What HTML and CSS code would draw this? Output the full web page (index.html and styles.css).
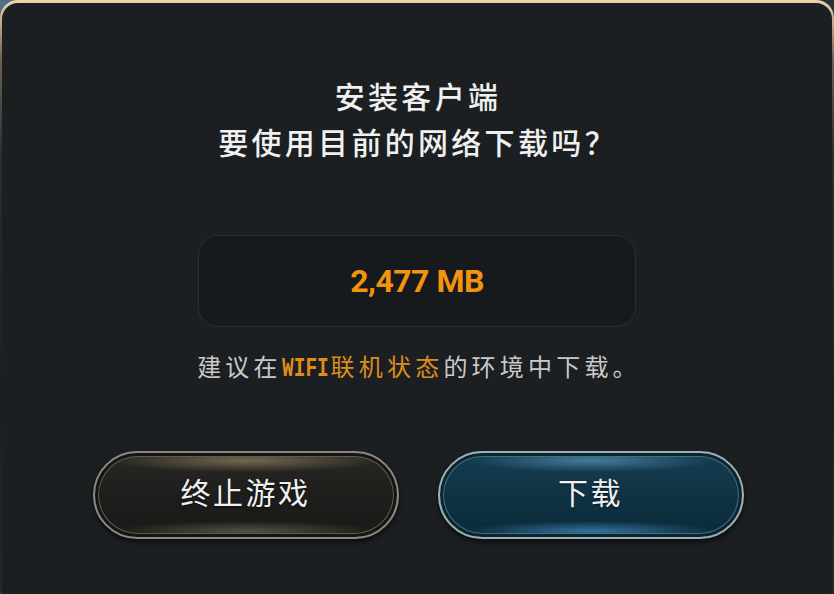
FILE: index.html
```html
<!DOCTYPE html>
<html lang="zh">
<head>
<meta charset="utf-8">
<title>安装客户端</title>
<link rel="stylesheet" href="styles.css">
</head>
<body>
<div class="frame">
  <div class="dialog">
    <div class="title">
      <div>安装客户端</div>
      <div>要使用目前的网络下载吗？</div>
    </div>
    <div class="size-box"><span class="size">2,477 MB</span></div>
    <p class="hint">建议在<span class="hl mono">WIFI</span><span class="hl">联机状态</span>的环境中下载。</p>
    <div class="actions">
      <button class="btn btn-quit">终止游戏</button>
      <button class="btn btn-download">下载</button>
    </div>
  </div>
</div>
</body>
</html>
```
FILE: styles.css
```css
html, body {
  margin: 0;
  padding: 0;
}
body {
  width: 834px;
  height: 594px;
  overflow: hidden;
  background: linear-gradient(135deg, #4f7186 0%, #2a3a44 40%, #1b1f22 100%);
  font-family: "Noto Sans CJK SC", "Noto Sans", sans-serif;
}
.frame {
  height: 594px;
  box-sizing: border-box;
  padding: 3px 2px 0;
  border-radius: 18px 18px 4px 4px;
  background: linear-gradient(to bottom, #ecd5ac 0px, #d2bb94 14px, #6b6152 60px, #2a2c2c 160px, #1b1f22 400px, #24282a 594px);
}
.dialog {
  height: 100%;
  box-sizing: border-box;
  border-radius: 16px 16px 3px 3px;
  background: #1b1f22;
  display: flex;
  flex-direction: column;
  align-items: center;
  padding-top: 69px;
}
.title {
  color: #f0f0f0;
  font-size: 30px;
  line-height: 46px;
  letter-spacing: 3.3px;
  text-align: center;
  font-weight: 500;
  padding-left: 2px;
}
.size-box {
  margin-top: 71px;
  width: 438px;
  height: 92px;
  box-sizing: border-box;
  border: 1px solid #2c3033;
  border-radius: 20px;
  background: #161a1d;
  display: flex;
  align-items: center;
  justify-content: center;
}
.size {
  font-family: Roboto, "Noto Sans", sans-serif;
  font-weight: 700;
  font-size: 32px;
  color: #f2940f;
  letter-spacing: -0.5px;
}
.hint {
  margin: 23px 0 0;
  font-size: 24px;
  line-height: 32px;
  letter-spacing: 4.2px;
  color: #c9c9c9;
  padding-left: 4px;
}
.hl {
  color: #de8d1c;
}
.mono {
  display: inline-block;
  font-family: "Liberation Mono", monospace;
  font-size: 27px;
  letter-spacing: 0;
  font-weight: 700;
  transform: scaleX(0.72);
  margin: 0 -7px 0 -9px;
}
.actions {
  margin-top: 66px;
  display: flex;
  gap: 39px;
  padding-left: 2px;
}
.btn {
  width: 306px;
  height: 88px;
  border-radius: 44px;
  font-family: "Noto Sans CJK SC", sans-serif;
  font-size: 30px;
  letter-spacing: 2.5px;
  color: #f0f0f0;
  text-shadow: 0 1px 2px rgba(0,0,0,.7);
  cursor: pointer;
  padding: 0 0 8px;
}
.btn-quit {
  border: 2px solid #8d877d;
  box-shadow: 0 3px 5px rgba(0,0,0,.6), inset 0 0 0 3px #141413, inset 0 0 0 4px #5e5a52;
  background:
    radial-gradient(ellipse 45% 14% at 50% 9%, rgba(190,170,125,.5), transparent),
    radial-gradient(ellipse 45% 12% at 50% 93%, rgba(190,180,150,.35), transparent),
    linear-gradient(#282724, #1d1d1b 55%, #191917);
}
.btn-download {
  border: 2px solid #9fb0b2;
  box-shadow: 0 3px 5px rgba(0,0,0,.6), inset 0 0 0 3px #0a2430, inset 0 0 0 4px #3f6f82;
  background:
    radial-gradient(ellipse 40% 14% at 50% 9%, rgba(110,175,215,.55), transparent),
    radial-gradient(ellipse 42% 12% at 50% 93%, rgba(80,160,225,.6), transparent),
    linear-gradient(#153d50, #0f3344 50%, #0a2a38);
}
```
